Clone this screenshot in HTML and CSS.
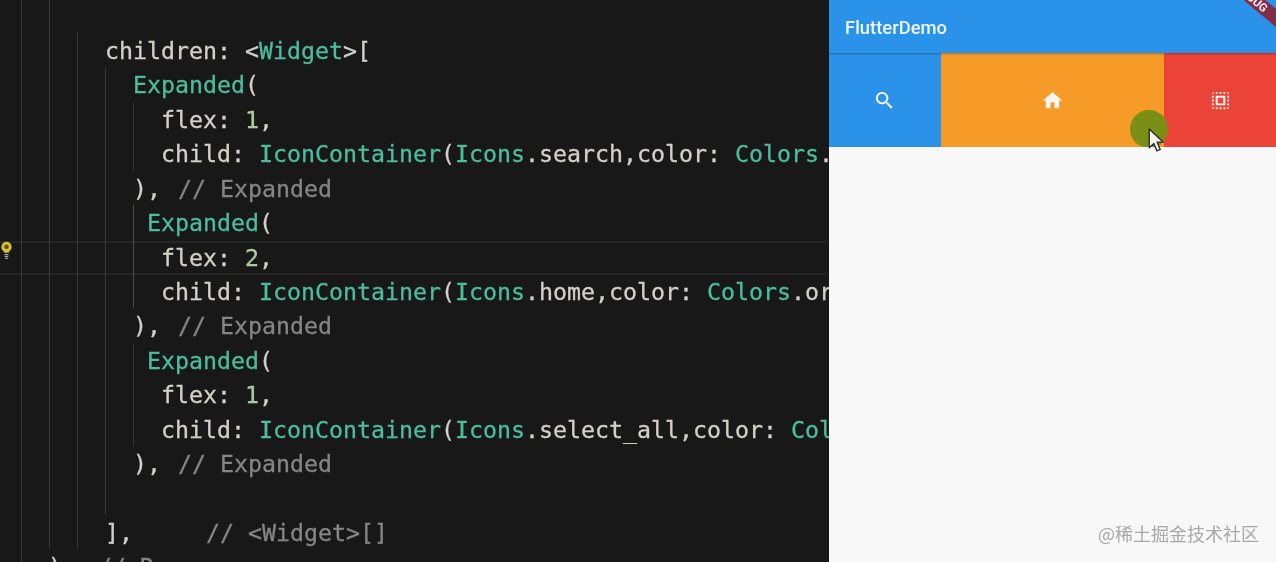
FILE: index.html
```html
<!DOCTYPE html>
<html lang="en">
<head>
<meta charset="utf-8">
<title>FlutterDemo</title>
<link rel="stylesheet" href="styles.css">
</head>
<body>
<div class="screen">
  <main class="editor">
    <div class="guide g1"></div>
    <div class="guide g2"></div>
    <div class="guide g3"></div>
    <div class="guide g4"></div>
    <div class="guide g5a"></div>
    <div class="guide g5b"></div>
    <div class="guide g5c"></div>
    <svg class="bulb" viewBox="0 0 14 20" aria-hidden="true">
      <path d="M7 1a5.6 5.6 0 0 0-3.4 10c.7.6 1 1.300 1 2h4.800c0-.7.3-1.400 1-2A5.600 5.600 0 0 0 7 1z" fill="#d8c02c"/>
      <circle cx="7" cy="6.500" r="2.400" fill="#5a4f16"/>
      <path d="M4.800 15h4.400M5 17h4M5.500 19h3" stroke="#a8a8a0" stroke-width="1.200"/>
    </svg>
    <div class="line i1">children: &lt;<span class="type">Widget</span>&gt;[</div>
    <div class="line i2"><span class="type">Expanded</span>(</div>
    <div class="line i4">flex: <span class="num">1</span>,</div>
    <div class="line i4">child: <span class="type">IconContainer</span>(<span class="type">Icons</span>.search,color: <span class="type">Colors</span>.</div>
    <div class="line i2">), <span class="comment">// Expanded</span></div>
    <div class="line i3"><span class="type">Expanded</span>(</div>
    <div class="line i4 active">flex: <span class="num">2</span>,</div>
    <div class="line i4">child: <span class="type">IconContainer</span>(<span class="type">Icons</span>.home,color: <span class="type">Colors</span>.or</div>
    <div class="line i2">), <span class="comment">// Expanded</span></div>
    <div class="line i3"><span class="type">Expanded</span>(</div>
    <div class="line i4">flex: <span class="num">1</span>,</div>
    <div class="line i4">child: <span class="type">IconContainer</span>(<span class="type">Icons</span>.select_all,color: <span class="type">Col</span></div>
    <div class="line i2">), <span class="comment">// Expanded</span></div>
    <div class="line"></div>
    <div class="line i1">],     <span class="comment">// &lt;Widget&gt;[]</span></div>
    <div class="line i0">)<span class="comment row-comment">// R</span></div>
  </main>
  <section class="phone">
    <header class="appbar">FlutterDemo</header>
    <div class="tabs">
      <div class="tab tab-blue">
        <svg class="icon" viewBox="0 0 24 24" aria-hidden="true"><path d="M15.500 14h-.79l-.28-.27C15.410 12.590 16 11.110 16 9.500 16 5.910 13.090 3 9.500 3S3 5.910 3 9.500 5.910 16 9.500 16c1.610 0 3.090-.59 4.230-1.570l.27.28v.79l5 4.990L20.490 19l-4.990-5zm-6 0C7.010 14 5 11.990 5 9.500S7.010 5 9.500 5 14 7.010 14 9.500 11.990 14 9.500 14z"/></svg>
      </div>
      <div class="tab tab-orange">
        <svg class="icon" viewBox="0 0 24 24" aria-hidden="true"><path d="M10 20v-6h4v6h5v-8h3L12 3 2 12h3v8z"/></svg>
      </div>
      <div class="tab tab-red">
        <svg class="icon" viewBox="0 0 24 24" aria-hidden="true"><path d="M3 5h2V3c-1.100 0-2 .9-2 2zm0 8h2v-2H3v2zm4 8h2v-2H7v2zM3 9h2V7H3v2zm10-6h-2v2h2V3zm6 0v2h2c0-1.100-.9-2-2-2zM5 21v-2H3c0 1.100.9 2 2 2zm-2-4h2v-2H3v2zM9 3H7v2h2V3zm2 18h2v-2h-2v2zm8-8h2v-2h-2v2zm0 8c1.100 0 2-.9 2-2h-2v2zm0-12h2V7h-2v2zm0 8h2v-2h-2v2zm-4 4h2v-2h-2v2zm0-16h2V3h-2v2zM7 17h10V7H7v10zm2-8h6v6H9V9z"/></svg>
      </div>
      <div class="touch"></div>
    </div>
    <div class="debug"><span>DEBUG</span></div>
    <svg class="cursor" viewBox="0 0 16 25" aria-hidden="true"><path d="M1 1v18l4.400-4.200 3 7.200 3.200-1.400-3-7h6z" fill="#f4f4f4" stroke="#2a2a2a" stroke-width="1.300" stroke-linejoin="round"/></svg>
    <div class="watermark">@稀土掘金技术社区</div>
  </section>
</div>
</body>
</html>
```

FILE: styles.css
```css
html, body {
  margin: 0;
  height: 100%;
  overflow: hidden;
  background: #181818;
}
.screen {
  display: flex;
  width: 1276px;
  height: 562px;
  overflow: hidden;
}
.editor {
  position: relative;
  flex: 0 0 829px;
  height: 562px;
  padding-top: 34px;
  box-sizing: border-box;
  overflow: hidden;
  background: #181818;
  color: #d2d0c8;
  font-family: "DejaVu Sans Mono", monospace;
  font-size: 23.25px;
  -webkit-text-stroke: 0.3px currentColor;
  filter: blur(0.5px);
}
.line {
  height: 34.43px;
  line-height: 34.43px;
  white-space: pre;
  box-sizing: border-box;
}
.i0 { padding-left: 48px; }
.i1 { padding-left: 105px; }
.i2 { padding-left: 133px; }
.i3 { padding-left: 147px; }
.i4 { padding-left: 161px; }
.active {
  line-height: 30px;
  margin-right: 3px;
  border-top: 2px solid #262626;
  border-bottom: 2px solid #262626;
}
.type { color: #4cbd9e; }
.num { color: #aec8a0; }
.comment { color: #858585; margin-left: 3px; }
.row-comment { margin-left: 36px; }
.guide {
  position: absolute;
  width: 1px;
  background: #3a3a3a;
}
.g1 { left: 21px; top: 0; bottom: 0; }
.g2 { left: 49px; top: 0; height: 548px; }
.g3 { left: 77px; top: 33px; height: 515px; }
.g4 { left: 105px; top: 68px; height: 447px; }
.g5a { left: 133px; top: 102px; height: 69px; background: #333; }
.g5b { left: 133px; top: 205px; height: 103px; background: #4a4a4a; }
.g5c { left: 133px; top: 344px; height: 102px; background: #333; }
.bulb {
  position: absolute;
  left: 0;
  top: 240px;
  width: 13px;
  height: 20px;
}
.phone {
  position: relative;
  flex: 1;
  height: 562px;
  overflow: hidden;
  background: #f8f8f8;
  filter: blur(0.35px);
}
.appbar {
  height: 53px;
  padding-left: 16px;
  line-height: 56px;
  background: #2b92ea;
  color: #eef7ff;
  font-family: Roboto, sans-serif;
  font-size: 18.4px;
  font-weight: 500;
  box-shadow: 0 1px 2px rgba(0, 0, 0, 0.28);
  position: relative;
  z-index: 1;
}
.tabs {
  position: relative;
  display: flex;
  height: 94px;
  overflow: hidden;
}
.tab {
  flex: 1;
  display: flex;
  align-items: center;
  justify-content: center;
}
.tab-blue { background: #2b92ea; }
.tab-orange { flex: 2; background: #f69a28; }
.tab-red { background: #ec4338; }
.icon {
  width: 23px;
  height: 23px;
  fill: #fdf6ee;
}
.debug {
  position: absolute;
  z-index: 2;
  top: -9.5px;
  right: -31px;
  width: 110px;
  height: 14px;
  transform: rotate(40deg);
  background: #7f2f4a;
  color: #f2e6ea;
  font-family: Roboto, sans-serif;
  font-size: 11.5px;
  font-weight: 700;
  line-height: 14px;
  text-align: center;
}
.touch {
  position: absolute;
  left: 301px;
  top: 57px;
  width: 38px;
  height: 38px;
  border-radius: 50%;
  background: #7b8f16;
}
.cursor {
  position: absolute;
  left: 319px;
  top: 128px;
  width: 17px;
  height: 26px;
}
.watermark {
  position: absolute;
  right: 17px;
  bottom: 18px;
  color: #a8a8a8;
  font-family: "Noto Sans CJK SC", sans-serif;
  font-size: 18px;
  line-height: 22px;
}
```
